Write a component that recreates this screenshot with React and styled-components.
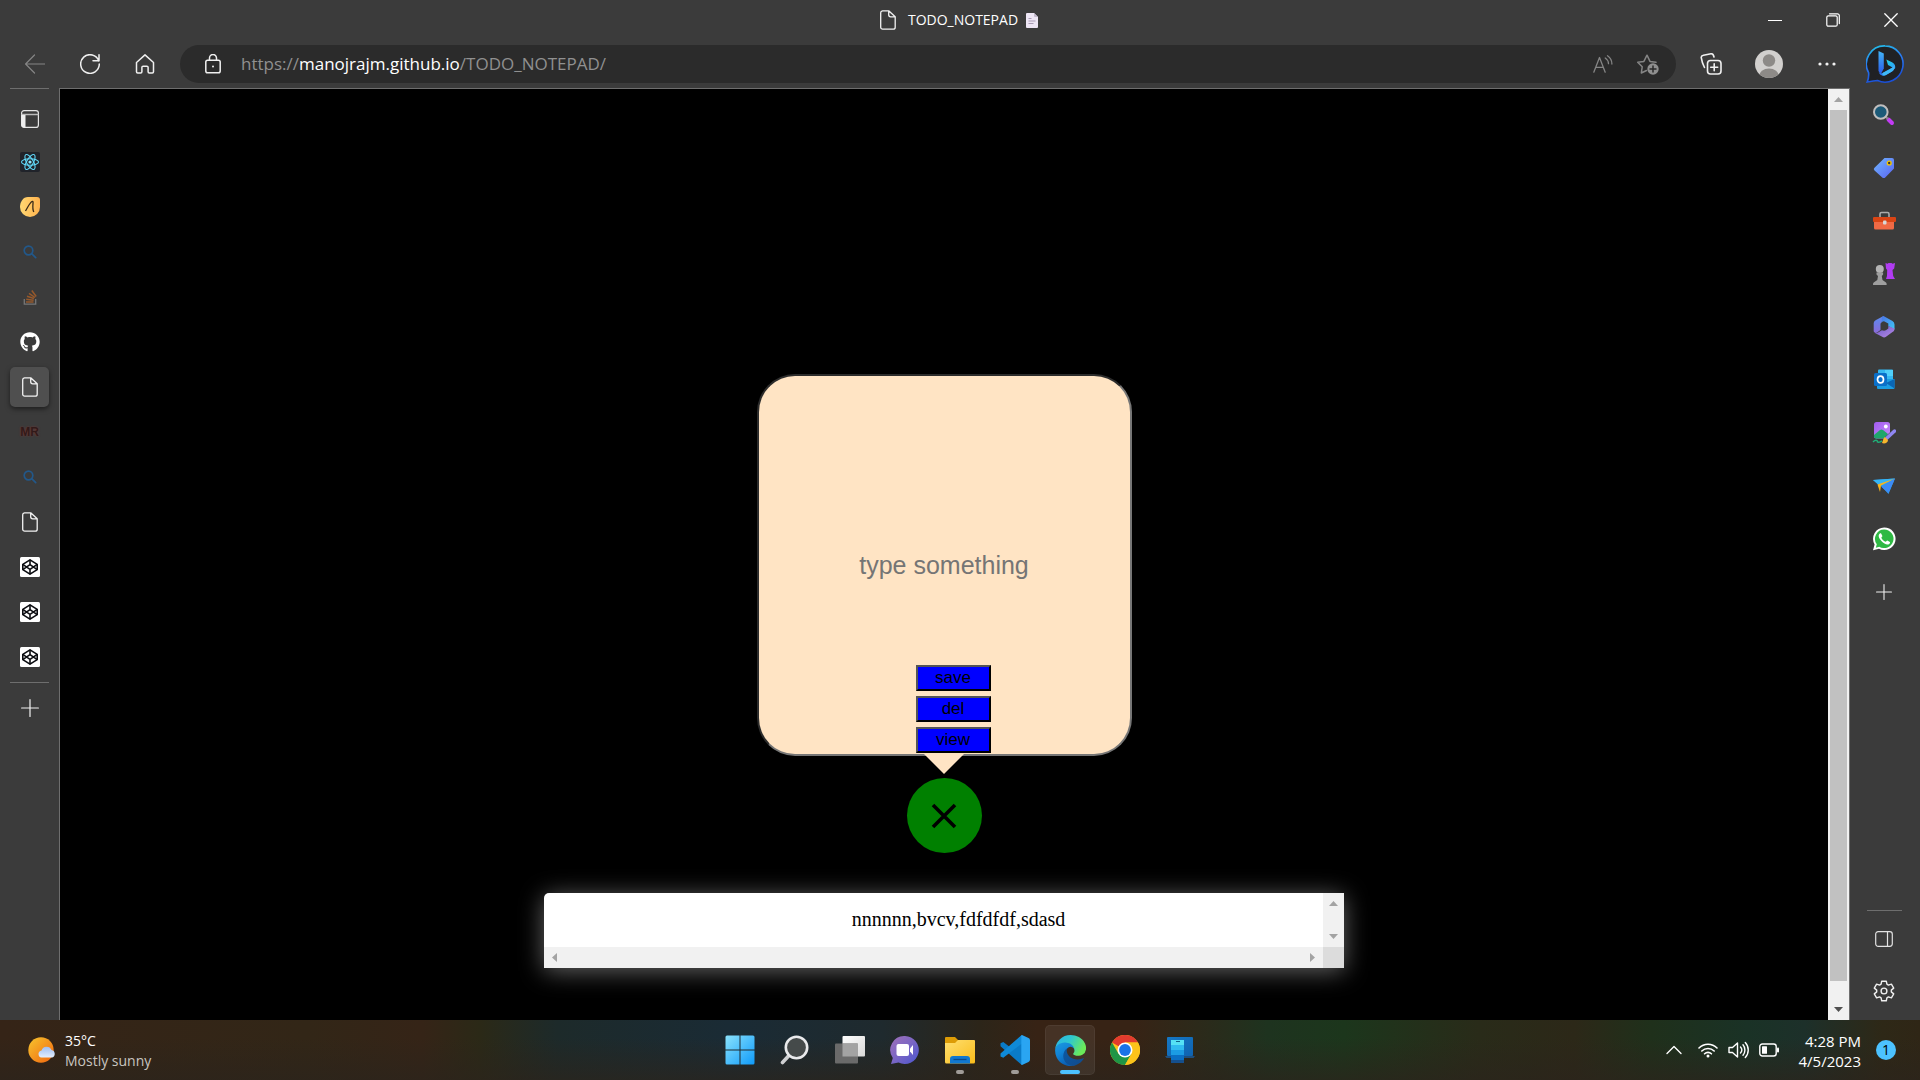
import React from 'react';
import styled, { createGlobalStyle, css } from 'styled-components';
import { FaGithub } from 'react-icons/fa';

const UI_FONT = '"Open Sans", "Noto Sans", sans-serif';
const CHROME = '#3b3b3b';
const LINE = '#6e6e6e';

const GlobalStyle = createGlobalStyle`
  *, *::before, *::after { box-sizing: border-box; }
  body {
    margin: 0;
    overflow: hidden;
    background: #000;
    color: #fff;
    font-family: ${UI_FONT};
    font-size: 14px;
  }
`;

const resetButton = css`
  display: flex;
  align-items: center;
  justify-content: center;
  flex: none;
  margin: 0;
  padding: 0;
  border: 0;
  background: none;
  color: inherit;
  font: inherit;
  cursor: pointer;
`;

const Screen = styled.div`
  display: grid;
  grid-template-rows: 40px 48px minmax(0, 1fr) 60px;
  height: 100vh;
`;

/* ---------- title bar ---------- */

const TitleBar = styled.header`
  display: grid;
  grid-template-columns: 1fr auto 1fr;
  align-items: center;
  background: ${CHROME};
`;

const PageTitle = styled.h1`
  display: flex;
  align-items: center;
  gap: 8px;
  grid-column: 2;
  margin: 0;
  padding-right: 4px;
  font-size: 14px;
  font-weight: 400;
  line-height: 20px;
`;

const TitleText = styled.span`
  padding-left: 2px;
`;

const WindowControls = styled.div`
  display: flex;
  justify-content: flex-end;
`;

const WindowButton = styled.button`
  ${resetButton}
  width: 58px;
  height: 40px;
`;

/* ---------- toolbar ---------- */

const Toolbar = styled.div`
  display: flex;
  align-items: center;
  background: ${CHROME};
`;

const NavGroup = styled.nav`
  display: flex;
  gap: 10px;
  padding: 0 13px 0 12px;
`;

const ToolButton = styled.button`
  ${resetButton}
  width: ${(p) => (p.$wide ? 46 : 45)}px;
  height: 38px;
  color: ${(p) => (p.$dim ? '#858585' : '#f0f0f0')};
`;

const AddressBar = styled.div`
  display: flex;
  flex: 1;
  align-items: center;
  height: 38px;
  padding: 0 6px 0 10px;
  border-radius: 19px;
  background: #2b2b2b;
`;

const Address = styled.div`
  flex: 1;
  padding-left: 6px;
  color: #909090;
  font-size: 17px;
  line-height: 24px;
  white-space: nowrap;
  outline: none;

  strong {
    color: #fff;
    font-weight: 400;
  }
`;

const ActionGroup = styled.div`
  display: flex;
  gap: 12px;
  padding: 0 12px;
`;

/* ---------- middle ---------- */

const Workspace = styled.div`
  display: grid;
  grid-template-columns: 59px minmax(0, 1fr) 70px;
  min-height: 0;
`;

const TabStrip = styled.aside`
  display: flex;
  flex-direction: column;
  align-items: center;
  gap: 5px;
  background: ${CHROME};
`;

const Rule = styled.hr`
  flex: none;
  width: ${(p) => p.$width}px;
  height: 1px;
  margin: 0;
  border: 0;
  background: ${LINE};
`;

const StripTop = styled.div`
  display: flex;
  flex-direction: column;
  align-items: center;
  gap: 10px;
  height: 49px;
`;

const Tab = styled.button`
  ${resetButton}
  width: 39px;
  height: 40px;
  border-radius: 5px;
  background: ${(p) => (p.$active ? '#4f4f4f' : 'transparent')};
  box-shadow: ${(p) => (p.$active ? '0 2px 5px rgba(0, 0, 0, 0.5)' : 'none')};
`;

const Monogram = styled.span`
  color: #301a19;
  font: 700 12px/20px "Liberation Sans", Arial, sans-serif;
  text-shadow: 0 0 2px #7a3532;
`;

const Viewport = styled.div`
  display: flex;
  min-height: 0;
  border: solid ${LINE};
  border-width: 1px 1px 0;
  background: #000;
`;

const Page = styled.main`
  display: flex;
  flex: 1;
  flex-direction: column;
  align-items: center;
  padding-top: 285px;
`;

const Scrollbar = styled.div`
  display: flex;
  flex: none;
  flex-direction: ${(p) => (p.$horizontal ? 'row' : 'column')};
  justify-content: space-between;
  ${(p) => (p.$horizontal ? 'height' : 'width')}: 21px;
  background: #f1f1f1;
`;

const ScrollArrow = styled.button`
  ${resetButton}
  width: 21px;
  height: 21px;
  color: ${(p) => (p.$enabled ? '#505050' : '#a3a3a3')};
`;

const Thumb = styled.div`
  flex: 1;
  margin: 0 2px 18px;
  background: #c1c1c1;
`;

const NoteForm = styled.form`
  display: grid;
  position: relative;
  width: 375px;

  &::after {
    content: '';
    position: absolute;
    top: calc(100% - 2px);
    left: calc(50% - 20px);
    border: 20px solid transparent;
    border-top-color: bisque;
    border-bottom: 0;
  }
`;

const NoteInput = styled.input`
  grid-area: 1 / 1;
  width: 100%;
  height: 382px;
  padding: 0;
  border: 2px solid;
  border-color: #2c2c2c #767676 #767676 #2c2c2c;
  border-radius: 38px;
  background: bisque;
  color: #000;
  font: 25px "Liberation Sans", Arial, sans-serif;
  text-align: center;
  outline: none;

  &::placeholder {
    color: #757575;
    opacity: 1;
  }
`;

const NoteActions = styled.div`
  display: flex;
  flex-direction: column;
  grid-area: 1 / 1;
  place-self: end center;
  gap: 5px;
  padding: 0 0 3px 18px;
`;

const NoteButton = styled.button`
  width: 75px;
  height: 26px;
  padding: 0;
  border: 2px solid;
  border-color: #555 #000 #000 #555;
  background: #00f;
  color: #000;
  font: 17px/20px "Liberation Sans", Arial, sans-serif;
`;

const CloseCircle = styled.button`
  ${resetButton}
  width: 75px;
  height: 75px;
  margin-top: 22px;
  border-radius: 50%;
  background: #008000;
  color: #000;
`;

const SavedBox = styled.section`
  display: grid;
  grid-template-columns: minmax(0, 1fr) 21px;
  grid-template-rows: 54px 21px;
  width: 800px;
  margin-top: 40px;
  border-radius: 5px 0 0 0;
  background: #fff;
  box-shadow: 0 3px 25px rgba(255, 255, 255, 0.4);
`;

const SavedText = styled.p`
  margin: 0;
  padding-left: 50px;
  color: #000;
  font: 20px/52px "Liberation Serif", "Times New Roman", serif;
  text-align: center;
`;

const ScrollCorner = styled.div`
  background: #dcdcdc;
`;

const SideBar = styled.aside`
  display: flex;
  flex-direction: column;
  align-items: center;
  gap: 5px;
  padding: 3px 2px 5px 0;
  background: ${CHROME};
`;

const SideButton = styled.button`
  ${resetButton}
  width: 48px;
  height: 48px;
`;

const SideFooter = styled.div`
  display: flex;
  flex-direction: column;
  align-items: center;
  gap: 4px;
  margin-top: auto;
`;

/* ---------- taskbar ---------- */

const TaskBar = styled.footer`
  display: grid;
  grid-template-columns: 1fr auto 1fr;
  align-items: center;
  background:
    linear-gradient(180deg, rgba(43, 36, 28, 0) 30%, rgba(43, 36, 28, 0.7) 100%),
    linear-gradient(90deg, #352417 0%, #322617 16%, #352417 22%, #2b2917 25%, #1d2a2a 29%,
      #1a2b35 38%, #1f2a2e 46%, #2c2519 51%, #372315 54%, #372315 59%, #2a2b1b 63%,
      #1e331f 66%, #1c361c 70%, #292b19 77%, #2c2818 82%, #1f301b 86%, #1a3226 91%,
      #1d302a 94%, #2e2817 98%, #2f2616 100%);
`;

const Weather = styled.button`
  ${resetButton}
  justify-self: start;
  gap: 9px;
  padding-left: 28px;
  text-align: left;
`;

const TwoLines = styled.span`
  display: flex;
  flex-direction: column;
  padding-top: 2px;
  font-size: 14px;
  line-height: 20px;
`;

const Muted = styled.span`
  color: #c9c5c0;
`;

const AppRow = styled.div`
  display: flex;
  gap: 5px;
`;

const AppButton = styled.button`
  ${resetButton}
  position: relative;
  width: 50px;
  height: 50px;
  border-radius: 5px;
  background: ${(p) => (p.$state === 'active' ? 'rgba(255, 255, 255, 0.07)' : 'none')};
  box-shadow: ${(p) => (p.$state === 'active' ? 'inset 0 0 0 1px rgba(255, 255, 255, 0.05)' : 'none')};

  &::after {
    content: '';
    display: ${(p) => (p.$state ? 'block' : 'none')};
    position: absolute;
    bottom: 1px;
    left: 50%;
    width: ${(p) => (p.$state === 'active' ? 20 : 8)}px;
    height: 4px;
    border-radius: 2px;
    background: ${(p) => (p.$state === 'active' ? '#4cc2ff' : '#a09c98')};
    transform: translateX(-50%);
  }
`;

const Tray = styled.div`
  display: flex;
  align-items: center;
  justify-self: end;
  gap: 16px;
  padding-right: 24px;
`;

const TrayButton = styled.button`
  ${resetButton}
  gap: 10px;
`;

const Clock = styled(TwoLines)`
  align-items: flex-end;
  padding-right: 5px;
  padding-left: 4px;
  font-size: 15px;
`;

const Badge = styled.span`
  width: 20px;
  height: 20px;
  border-radius: 50%;
  background: #4cc2ff;
  color: #000;
  font-size: 14px;
  line-height: 20px;
  text-align: center;
`;

/* ---------- drawings ---------- */

function Line({ w = 20, h = w, box, sw = 1, children, color = 'currentColor' }) {
  return (
    <svg width={w} height={h} viewBox={box || `0 0 ${w} ${h}`} fill="none" stroke={color}
      strokeWidth={sw} strokeLinecap="round" strokeLinejoin="round" aria-hidden="true">
      {children}
    </svg>
  );
}

function Art({ w = 24, h = w, box, children }) {
  return (
    <svg width={w} height={h} viewBox={box || `0 0 ${w} ${h}`} aria-hidden="true">
      {children}
    </svg>
  );
}

function Gradient({ id, from, to, x2 = 1, y2 = 1, mid }) {
  return (
    <linearGradient id={id} x1="0" y1="0" x2={x2} y2={y2}>
      <stop offset="0" stopColor={from} />
      {mid && <stop offset=".5" stopColor={mid} />}
      <stop offset="1" stopColor={to} />
    </linearGradient>
  );
}

const FileIcon = () => (
  <Line w={20} sw={1.3} color="#f2f2f2">
    <path d="M4.500.8h6.200l6.500 6v10.400a2 2 0 0 1-2 2H4.700a2 2 0 0 1-2-2V2.800a2 2 0 0 1 1.800-2zM10.700.8v4a2 2 0 0 0 2 2h4.500" />
  </Line>
);

const PageEmoji = () => (
  <Art w={12} h={15}>
    <path d="M1 0h7l4 4v10a1 1 0 0 1-1 1H1a1 1 0 0 1-1-1V1a1 1 0 0 1 1-1z" fill="#eee6f5" />
    <path d="M8 0l4 4H9a1 1 0 0 1-1-1z" fill="#c4bacd" />
    <path d="M2.500 5.500h3M2.500 8h7M2.500 10.500h5" stroke="#a99bb4" />
  </Art>
);

const PlusIcon = ({ size = 18 }) => (
  <Line w={size} box="0 0 18 18" sw={1.2} color="#f2f2f2"><path d="M9 .6v16.800M.6 9h16.800" /></Line>
);

const PanelIcon = () => (
  <Art w={20}>
    <rect x="1.600" y="1.600" width="16.800" height="16.800" rx="2.500" fill="none" stroke="#e6e6e6" strokeWidth="1.200" />
    <path d="M1.500 5.500h17" stroke="#bbb" strokeWidth="1.500" />
    <path d="M1.500 6h4v12.400H4a2.500 2.500 0 0 1-2.500-2.500z" fill="#eee" />
  </Art>
);

const ReactIcon = () => (
  <Art w={20}>
    <rect width="20" height="20" rx="2" fill="#20232a" />
    <g fill="none" stroke="#61dafb" strokeWidth="1.100">
      <ellipse cx="10" cy="10" rx="8.500" ry="3.300" />
      <ellipse cx="10" cy="10" rx="8.500" ry="3.300" transform="rotate(60 10 10)" />
      <ellipse cx="10" cy="10" rx="8.500" ry="3.300" transform="rotate(120 10 10)" />
    </g>
    <circle cx="10" cy="10" r="1.600" fill="#8be8ff" />
  </Art>
);

const AmberIcon = () => (
  <Art w={20}>
    <defs><Gradient id="amber" from="#ffd873" to="#ffb24d" y2={0} /></defs>
    <path d="M8 0h9a3 3 0 0 1 3 3v7A10 10 0 1 1 0 10C0 5 3 0 8 0z" fill="url(#amber)" />
    <path d="M5.500 14C8 10 9.500 6 12 4.500c1-.5 1.200.5 1 2-.3 3-.5 6 .8 8.500" fill="none" stroke="#3a2a18" strokeWidth="1.300" />
  </Art>
);

const SearchTab = () => (
  <Line w={14} sw={1.7} color="#22588a"><circle cx="5.500" cy="5.500" r="4.300" /><path d="M8.700 8.700l4 4" /></Line>
);

const StackIcon = () => (
  <Art w={16}>
    <path d="M2.300 10v5.200h11.400V10" fill="none" stroke="#777" strokeWidth="1.300" />
    <path d="M4 13h7.500M4.200 10.300l7.400.9M5 7.300l7 2.200M7 4.300l6 4.200M9.800 1.500l4.400 6" stroke="#96592c" strokeWidth="1.500" fill="none" />
  </Art>
);

const CodepenIcon = () => (
  <Art w={20}>
    <rect width="20" height="20" rx="1.500" fill="#fff" />
    <g fill="none" stroke="#0c0d11" strokeWidth="1.600" strokeLinejoin="round">
      <path d="M10 2.800l7.200 4.600v5.200L10 17.200l-7.200-4.600V7.400z" />
      <path d="M2.800 7.400L10 12.400l7.200-5M2.800 12.600L10 7.600l7.200 5M10 2.800v4.800M10 12.400v4.800" />
    </g>
  </Art>
);

const BingIcon = () => (
  <Art w={38}>
    <defs>
      <Gradient id="bingRing" from="#22c6e6" to="#1a50d8" mid="#2a7cf2" x2={0.3} />
      <Gradient id="bingStem" from="#42b4f5" to="#2a5bea" x2={0} />
      <Gradient id="bingLeaf" from="#22d0e8" to="#2f9df5" />
    </defs>
    <path d="M19 .9a18.100 18.100 0 1 1-7.500 34.600c-3 .2-7 .9-10.300 1.500 1.300-3 1.700-6.300 1.400-9.300A18.100 18.100 0 0 1 19 .9z" fill="#202124" stroke="url(#bingRing)" strokeWidth="1.600" />
    <path d="M12.500 6l5.300 2.500V23.500l-2.800 5.200a4 4 0 0 1-2.500-3.500z" fill="url(#bingStem)" />
    <path d="M20.300 14.500l5.700 2.700a6 6 0 0 1 3 6.800l-5.500-3.200-1.500-.8z" fill="url(#bingLeaf)" />
    <path d="M12.500 25c0 4.500 3.800 7 7.500 5l6-3.500c3-2 3.500-5.500 1.800-7 0 2-1.200 3.200-3 4L16.500 28c-2 1-4-.3-4-3z" fill="#2c74f0" />
    <path d="M16.500 28l8.300-4.500c1.800-.8 3-2 3-4 1.700 1.500 1.200 5-1.800 7L20 30c-1.300.6-2.500.7-3.500.4z" fill="#3fb9f6" />
  </Art>
);

const LensIcon = () => (
  <Art>
    <path d="M16.500 16.500l3.500 3.500" stroke="#c33bf5" strokeWidth="4" strokeLinecap="round" />
    <path d="M13 13l3 3" stroke="#888" strokeWidth="2" />
    <circle cx="8.800" cy="9" r="6.800" fill="#1c5a78" stroke="#c0bebe" strokeWidth="2" />
  </Art>
);

const TagIcon = () => (
  <Art>
    <defs><Gradient id="tag" from="#70b8ff" to="#5a62f0" /></defs>
    <path d="M12.500 2H20a2 2 0 0 1 2 2v8.500L13.500 21.200a2.500 2.500 0 0 1-3.500 0L2.500 14.500a1.800 1.800 0 0 1 0-2.700z" fill="url(#tag)" />
    <circle cx="17.200" cy="7" r="1.900" fill="#333" stroke="#f5c400" strokeWidth="1.400" />
  </Art>
);

const ToolboxIcon = () => (
  <Art>
    <path d="M8 8V5a1.500 1.500 0 0 1 1.500-1.500h6A1.500 1.500 0 0 1 17 5v3" fill="none" stroke="#aaa" strokeWidth="1.600" />
    <rect x="2" y="11" width="20" height="9.500" rx="1.500" fill="#f06a45" />
    <rect x="1" y="8" width="23" height="5" rx="1" fill="#d94414" />
    <rect x="11" y="11.500" width="3.500" height="4" rx="1" fill="#d8d8d8" />
  </Art>
);

const ChessIcon = () => (
  <Art>
    <path d="M13.500 1l2 .8 1-.8h3l1 .8 2.500-.8-.8 5.500-1.700 1.500.7 6 1.800 3h-9l1-3 .2-6-1.200-1.500z" fill="#b13cf2" />
    <circle cx="7.800" cy="7" r="4" fill="#b4b4b4" />
    <path d="M4.500 10.500h6.600v2l-1.300 1.500.7 4 3.500 2.500c.8.8.8 2.500.5 2.500H1.300c-.5 0-.4-1.800.4-2.500L5.300 18l.7-4-1.500-1.500z" fill="#9f9f9f" />
  </Art>
);

const M365Icon = () => (
  <Art>
    <defs>
      <Gradient id="mA" from="#5a8df0" to="#8a6ad8" x2={0} />
      <Gradient id="mB" from="#4a74e8" to="#3fc8f5" />
      <Gradient id="mC" from="#6a5ac8" to="#b78ae6" />
    </defs>
    <path d="M11.500 1L4 5A3.500 3.500 0 0 0 1.700 8v8c0 1.600 2 2.400 3.400 1.500L8.500 15V9.500c0-1 .3-1.700 1.200-2.300z" fill="url(#mA)" />
    <path d="M11.500 1L20.500 6a4 4 0 0 1 2 3.400v5L16.300 11V8.500L12 6.300c-2 0-2.300 1.200-2.300 2.500V3.500c0-1.200.7-2 1.800-2.500z" fill="url(#mB)" />
    <path d="M22.500 13.500c0 1.800-.6 2.800-2 3.600L14 21.800a3.500 3.500 0 0 1-3.800 0L3 17.900c1.600.4 2.800-.2 3.900-.9l3-1.800c1.500.6 2.800.6 4 0l2.400-1.600V11z" fill="url(#mC)" />
  </Art>
);

const OutlookIcon = () => (
  <Art>
    <rect x="6" y="1.500" width="15" height="13" rx="1" fill="#35b8f1" />
    <path d="M13 2h8v6h-8z" fill="#50d0fa" />
    <path d="M5 11l17.500 0v9a1 1 0 0 1-1 1H6a1 1 0 0 1-1-1z" fill="#1b9de2" />
    <path d="M22.500 11v9.500L14 15z" fill="#0a66b5" />
    <rect x="2" y="5" width="13" height="13" rx="1.500" fill="#0a6fc8" />
    <ellipse cx="8.500" cy="11.500" rx="3" ry="3.400" fill="none" stroke="#fff" strokeWidth="1.700" />
  </Art>
);

const DesignerIcon = () => (
  <Art>
    <defs><Gradient id="des" from="#a25cf0" to="#c48bf8" /></defs>
    <rect x="2" y="1" width="16" height="16.500" rx="2.500" fill="url(#des)" />
    <circle cx="13.800" cy="5.500" r="1.900" fill="#fff" />
    <path d="M2 14l6-5a2.500 2.500 0 0 1 3 0l5 4-4 4.500H4a2 2 0 0 1-2-2z" fill="#1fa66b" />
    <path d="M1 21c2.500-2.500 4.500-2 4.500 0 1.500 1 3-.5 4.500-1" fill="none" stroke="#20b078" strokeWidth="1.500" />
    <path d="M15 17.500l8-7.500" stroke="#3b3b3b" strokeWidth="5" strokeLinecap="round" />
    <path d="M15 17l7.500-7" stroke="#8f86f2" strokeWidth="3.400" strokeLinecap="round" />
    <path d="M13 16l3 3c0 3-3.500 4-6 3 1-1.500 1-5 3-6z" fill="#f7b62c" />
  </Art>
);

const DropIcon = () => (
  <Art>
    <path d="M1 6l22-1.500L16.500 20 10 13z" fill="#2c9cf0" />
    <path d="M1 6l22-1.500L6.500 11z" fill="#35b5f5" />
    <path d="M23 4.500L9 11.500 8 18 5.500 10.500z" fill="#f9b51c" />
    <path d="M23 4.500L16.500 19 9.500 13z" fill="#3d8bf5" />
  </Art>
);

const WhatsAppIcon = () => (
  <Art>
    <path d="M12.200.5A11.300 11.300 0 1 1 7 21.800L1 23.300l1.600-5.800A11.300 11.300 0 0 1 12.200.5z" fill="#fff" />
    <path d="M12.200 2.500A9.300 9.300 0 1 1 7.300 19.700l-3.500 1 1-3.400A9.300 9.300 0 0 1 12.200 2.500z" fill="#2fb944" />
    <path d="M9.300 6.800c-.4-.7-1-.6-1.500-.2-2 1.800-1.200 4.500 1.600 7.400s5.800 4.300 7.800 2.900c.8-.6 1-1.600.7-2l-2.600-1.300c-.7 0-.9 1.200-1.600 1.200-1.500-.3-4-2.700-4.300-4 0-.6 1.100-1.100 1-1.700z" fill="#fff" />
  </Art>
);

const WeatherIcon = () => (
  <Art w={28} h={26}>
    <defs>
      <Gradient id="sun" from="#f7c52e" to="#f0640e" />
      <Gradient id="cloud" from="#9dbdf2" to="#e4eefc" x2={0} />
    </defs>
    <circle cx="13" cy="13" r="12.700" fill="url(#sun)" />
    <path d="M13.500 20.500a3.600 3.600 0 0 1 0-7.100A5.300 5.300 0 0 1 23.500 13a3.900 3.900 0 0 1 .7 7.500z" fill="url(#cloud)" />
  </Art>
);

const StartIcon = () => (
  <Art w={30}>
    <defs><Gradient id="win" from="#8ae2fc" to="#0f9bfa" /></defs>
    <g fill="url(#win)">
      <path d="M2 .5h12.500V14.500H.5V2A1.500 1.500 0 0 1 2 .5zM15.500.5H28A1.500 1.500 0 0 1 29.500 2v12.500h-14zM.5 15.500h14v14H2A1.500 1.500 0 0 1 .5 28zM15.500 15.500h14V28a1.500 1.500 0 0 1-1.500 1.500H15.500z" />
    </g>
  </Art>
);

const TaskSearchIcon = () => (
  <Art w={30}>
    <path d="M8.500 21l-6 6.500" stroke="#cfd0d2" strokeWidth="3.600" strokeLinecap="round" />
    <circle cx="16.500" cy="12.500" r="10.700" fill="#454a4a" stroke="#e9eaec" strokeWidth="2.600" />
  </Art>
);

const TaskViewIcon = () => (
  <Art w={30}>
    <defs><Gradient id="tv" from="#fff" to="#d8d8d8" /></defs>
    <rect x="7.500" y="1" width="22.500" height="20.500" rx="1" fill="url(#tv)" />
    <rect x="0" y="8.500" width="23" height="20" rx="1" fill="#6a6a6a" />
    <rect x="7.500" y="8.500" width="15.500" height="13" fill="#a3a3a3" />
  </Art>
);

const ChatIcon = () => (
  <Art w={30}>
    <defs><Gradient id="chat" from="#a070b8" to="#4a55d0" mid="#7a66c4" /></defs>
    <path d="M15 1a14 14 0 1 1-6.500 26.500L1 29l1.800-6A14 14 0 0 1 15 1z" fill="url(#chat)" />
    <rect x="6.500" y="9" width="12.500" height="12" rx="2" fill="#fff" />
    <path d="M20 13.500l3-3.500v10l-3-3.500z" fill="#fff" />
  </Art>
);

const FolderIcon = () => (
  <Art w={30}>
    <defs><Gradient id="fold" from="#ffdf70" to="#f9bc1a" /></defs>
    <path d="M0 3a1 1 0 0 1 1-1h9l3 3v6H0z" fill="#dd9c06" />
    <path d="M0 8h10l3-3h16a1 1 0 0 1 1 1v21a1.500 1.500 0 0 1-1.500 1.500h-27A1.500 1.500 0 0 1 0 27z" fill="url(#fold)" />
    <path d="M5 28.500V24a3 3 0 0 1 3-3h14a3 3 0 0 1 3 3v4.500z" fill="#1178cf" />
    <path d="M8.500 24.500h13" stroke="#0a4a8c" strokeWidth="1.300" />
  </Art>
);

const CodeIcon = () => (
  <Art w={30}>
    <path d="M22 0L9.500 11.700 3.300 7 .5 8.300v3L21.500 29.800l.8-.3V21.500z" fill="#0a7bc8" />
    <path d="M22 8.500L3.300 22.800.5 21.500v-3L21.500.2z" fill="#0f8ad8" />
    <path d="M22 0l6.500 3A2.500 2.500 0 0 1 30 5.200v19.600a2.500 2.500 0 0 1-1.500 2.200L22 30c-.8-.4-1-1-.7-2V2c-.3-1-.1-1.600.7-2z" fill="#2aa5f2" />
  </Art>
);

const EdgeIcon = () => (
  <Art w={31} box="4 4 256 256">
    <defs>
      <Gradient id="eA" from="#0c59a4" to="#114a8b" />
      <Gradient id="eB" from="#1b9de2" to="#0a5cb0" mid="#1283d6" x2={0.5} />
      <Gradient id="eC" from="#2bb3e8" to="#6bea5a" mid="#2fc7ce" y2={0.4} />
    </defs>
    <path fill="url(#eA)" d="M235.680 195.460a93.730 93.730 0 0 1-10.540 4.710 101.870 101.870 0 0 1-35.900 6.460c-47.320 0-88.540-32.550-88.540-74.320A31.480 31.480 0 0 1 117.130 105c-42.800 1.800-53.800 46.400-53.800 72.530 0 73.880 68.090 81.370 82.760 81.370 7.910 0 19.840-2.300 27-4.560l1.310-.44a128.340 128.340 0 0 0 66.600-52.800 4 4 0 0 0-5.320-5.640z" />
    <path fill="url(#eB)" d="M110.340 246.340A79.200 79.200 0 0 1 87.600 225a80.720 80.720 0 0 1 29.530-120c3.120-1.470 8.450-4.130 15.540-4a32.350 32.350 0 0 1 25.690 13 31.880 31.880 0 0 1 6.360 18.660c0-.21 24.460-79.600-80-79.600-43.900 0-80 41.660-80 78.210a130.150 130.150 0 0 0 12.110 56 128 128 0 0 0 156.380 67.110 75.550 75.550 0 0 1-62.780-8z" />
    <path fill="url(#eC)" d="M156.940 153.780c-.81 1.050-3.300 2.500-3.300 5.660 0 2.610 1.700 5.120 4.720 7.230 14.380 10 41.490 8.680 41.560 8.680a59.560 59.560 0 0 0 30.270-8.350 61.380 61.380 0 0 0 30.430-52.880c.26-22.410-8-37.310-11.340-43.910-21.190-41.440-66.920-65.270-116.650-65.270a128 128 0 0 0-128 126.200c.48-36.540 36.800-66.050 80-66.050 3.500 0 23.460.34 42 10.070 16.340 8.580 24.900 18.940 30.850 29.210 6.180 10.670 7.280 24.150 7.280 29.520 0 5.370-2.740 13.330-7.820 19.890z" />
  </Art>
);

const ChromeIcon = () => (
  <Art w={30}>
    <circle cx="15" cy="15" r="15" fill="#fcc31a" />
    <path d="M15 15L2 7.500A15 15 0 0 1 28 7.500H15z" fill="#e33b2e" />
    <path d="M2 7.500A15 15 0 0 0 15 30l6.500-11.300L15 15 8.500 18.700z" fill="#1e9546" />
    <path d="M21.500 18.700L15 30A15 15 0 0 0 28 7.500H15z" fill="#fcc31a" />
    <circle cx="15" cy="15" r="7.500" fill="#fff" />
    <circle cx="15" cy="15" r="5.900" fill="#1a73e8" />
  </Art>
);

const PhoneLinkIcon = () => (
  <Art w={30}>
    <defs><Gradient id="link" from="#1578c4" to="#0f62b0" /></defs>
    <rect x="2" y="2" width="26" height="19" rx="1" fill="url(#link)" />
    <path d="M0 21h30l-1.500 2h-27z" fill="#1d4f80" />
    <path d="M6 5h13v20H6z" fill="#1b9ce4" />
    <path d="M6 5h13v5H6z" fill="#55e2f5" />
    <path d="M6 10h13v5H6z" fill="#30bcf0" />
    <path d="M6 20h13v5H6z" fill="#0a6fc4" />
    <path d="M6 25h13v3H6z" fill="#154f8c" />
    <path d="M11 6.500h4" stroke="#12658c" />
  </Art>
);

const BackIcon = () => (
  <Line w={20} sw={1.2}><path d="M19.500 10H.6M9.500 1L.6 10l8.900 9" /></Line>
);

const ReloadIcon = () => (
  <Line w={20} sw={1.5}><path d="M18.800 7A9.300 9.300 0 1 0 19.300 10M19 .8V6.800H13" /></Line>
);

const HomeIcon = () => (
  <Line w={20} sw={1.5}>
    <path d="M1.500 8.500L10 .9l8.500 7.600V17.800a1.200 1.200 0 0 1-1.200 1.200h-3a1.200 1.200 0 0 1-1.200-1.200V13.500a1.300 1.300 0 0 0-1.300-1.300H8.200a1.300 1.300 0 0 0-1.300 1.300v4.300A1.200 1.200 0 0 1 5.700 19h-3a1.200 1.200 0 0 1-1.200-1.200z" />
  </Line>
);

const LockIcon = () => (
  <Line w={18} h={20} sw={1.5}>
    <rect x="1.800" y="6.200" width="14.400" height="12.600" rx="1.800" />
    <path d="M5.500 6V4a3.500 3.500 0 0 1 7 0v2" />
    <circle cx="9" cy="12.500" r="1" fill="currentColor" stroke="none" />
  </Line>
);

const ReadAloudIcon = () => (
  <Line w={20} h={18} sw={1.3}>
    <path d="M.8 17.200L6.500 2.500l5.700 14.700M2.700 12.300h7.600M12.200 3a7 7 0 0 1 3.300 5.700M14.500.8a10 10 0 0 1 4.400 8.200" />
  </Line>
);

const StarIcon = () => (
  <Line w={24} h={22} sw={1.5}>
    <path d="M10.500 17.500L5.300 20l.9-6.200L1.700 9.300l6.200-.9L11 2.200l3 6.200 6 .9" />
    <circle cx="17" cy="16" r="5.700" fill="#8f8f8f" stroke="none" />
    <path d="M17 13v6M14 16h6" stroke="#2b2b2b" />
  </Line>
);

const CollectionsIcon = () => (
  <Line w={22} sw={1.6}>
    <rect x="7.500" y="7.500" width="13.500" height="13.500" rx="3" />
    <path d="M14.200 10.700v7M10.700 14.200h7M4.500 14.500C3 11.500 1.500 6.500 1.200 4.300c0-1.200 1-1.700 2.300-2L11 .8c1.800-.2 2.500.8 3 3.200" />
  </Line>
);

const Avatar = () => (
  <Art w={28}>
    <defs><clipPath id="face"><circle cx="14" cy="14" r="14" /></clipPath></defs>
    <g clipPath="url(#face)">
      <rect width="28" height="28" fill="#d2d0ce" />
      <circle cx="14" cy="10.500" r="6.200" fill="#8d8a87" />
      <ellipse cx="14" cy="26.500" rx="10" ry="8" fill="#8d8a87" />
    </g>
  </Art>
);

const DotsIcon = () => (
  <Art w={18} h={4}><g fill="#f2f2f2"><circle cx="2" cy="2" r="1.600" /><circle cx="9" cy="2" r="1.600" /><circle cx="16" cy="2" r="1.600" /></g></Art>
);

const DockIcon = () => (
  <Line w={18} h={16} sw={1.2} color="#e2e2e2"><rect x=".7" y=".7" width="16.600" height="14.600" rx="2.500" /><path d="M12.500 1v14" /></Line>
);

const GearIcon = () => (
  <Line w={22} sw={1.4} color="#f0f0f0">
    <path d="M8.700 1.200h4.600l.6 3 1.500.9 3-1 2.300 4-2.400 2v1.800l2.400 2-2.300 4-3-1-1.500.9-.6 3H8.700l-.6-3-1.500-.9-3 1-2.300-4 2.400-2v-1.800l-2.400-2 2.300-4 3 1 1.500-.9z" />
    <circle cx="11" cy="11" r="2.900" />
  </Line>
);

const Chevron = () => <Line w={16} h={10} sw={1.4}><path d="M1 8.500l7-7 7 7" /></Line>;

const WifiIcon = () => (
  <Line w={20} h={16} sw={1.6}>
    <path d="M1 6a12.700 12.700 0 0 1 18 0M3.800 9a8.800 8.800 0 0 1 12.400 0M6.600 11.800a4.800 4.800 0 0 1 6.800 0" />
    <circle cx="10" cy="14" r="1.500" fill="currentColor" stroke="none" />
  </Line>
);

const SpeakerIcon = () => (
  <Line w={21} h={18} sw={1.4}>
    <path d="M1 6.500h3.500L9.500 2v14l-5-4.500H1zM12.500 6a4.500 4.500 0 0 1 0 6M15 3.800a8 8 0 0 1 0 10.400M17.300 1.500a11 11 0 0 1 0 15" />
  </Line>
);

const BatteryIcon = () => (
  <Line w={20} h={14} sw={1.4}>
    <rect x=".8" y="1" width="16.400" height="12" rx="2.500" />
    <rect x="3" y="3.200" width="5" height="7.600" rx=".5" fill="currentColor" stroke="none" />
    <path d="M19 5.500v3" strokeWidth="2" />
  </Line>
);

const ARROWS = {
  up: 'M0 5l4.500-5L9 5z',
  down: 'M0 0h9L4.500 5z',
  left: 'M5 0v9L0 4.500z',
  right: 'M0 0l5 4.500L0 9z',
};

function Arrow({ to, enabled }) {
  const upright = to === 'up' || to === 'down';
  return (
    <ScrollArrow type="button" aria-label={`Scroll ${to}`} $enabled={enabled}>
      <svg width={upright ? 9 : 5} height={upright ? 5 : 9} fill="currentColor" aria-hidden="true">
        <path d={ARROWS[to]} />
      </svg>
    </ScrollArrow>
  );
}

/* ---------- data ---------- */

const TABS = [
  { name: 'React', icon: <ReactIcon /> },
  { name: 'Amber', icon: <AmberIcon /> },
  { name: 'Search', icon: <SearchTab /> },
  { name: 'Stack Overflow', icon: <StackIcon /> },
  { name: 'GitHub', icon: <FaGithub size={20} color="#fff" /> },
  { name: 'TODO_NOTEPAD', icon: <FileIcon />, active: true },
  { name: 'MR', icon: <Monogram>MR</Monogram> },
  { name: 'Search results', icon: <SearchTab /> },
  { name: 'Document', icon: <FileIcon /> },
  { name: 'Pen one', icon: <CodepenIcon /> },
  { name: 'Pen two', icon: <CodepenIcon /> },
  { name: 'Pen three', icon: <CodepenIcon /> },
];

const SIDE_APPS = [
  ['Search', LensIcon], ['Shopping', TagIcon], ['Tools', ToolboxIcon], ['Games', ChessIcon],
  ['Microsoft 365', M365Icon], ['Outlook', OutlookIcon], ['Image Creator', DesignerIcon],
  ['Drop', DropIcon], ['WhatsApp', WhatsAppIcon],
];

const TASK_APPS = [
  ['Start', StartIcon], ['Search', TaskSearchIcon], ['Task view', TaskViewIcon], ['Chat', ChatIcon],
  ['File Explorer', FolderIcon, 'open'], ['Visual Studio Code', CodeIcon, 'open'],
  ['Edge', EdgeIcon, 'active'], ['Chrome', ChromeIcon], ['Phone Link', PhoneLinkIcon],
];

export default function App() {
  return (
    <Screen>
      <GlobalStyle />

      <TitleBar>
        <PageTitle><FileIcon /><TitleText>TODO_NOTEPAD</TitleText><PageEmoji /></PageTitle>
        <WindowControls>
          <WindowButton type="button" aria-label="Minimize"><Line w={14} sw={1.2}><path d="M.5 7.500h13" /></Line></WindowButton>
          <WindowButton type="button" aria-label="Restore">
            <Line w={14} sw={1.2}><rect x=".8" y="2.800" width="10.400" height="10.400" rx="1.500" /><path d="M3.500.8h8a1.800 1.800 0 0 1 1.800 1.800v8" /></Line>
          </WindowButton>
          <WindowButton type="button" aria-label="Close"><Line w={14} sw={1.3}><path d="M.8.8l12.400 12.400M13.200.8L.8 13.200" /></Line></WindowButton>
        </WindowControls>
      </TitleBar>

      <Toolbar>
        <NavGroup>
          <ToolButton type="button" aria-label="Back" $dim><BackIcon /></ToolButton>
          <ToolButton type="button" aria-label="Refresh"><ReloadIcon /></ToolButton>
          <ToolButton type="button" aria-label="Home"><HomeIcon /></ToolButton>
        </NavGroup>
        <AddressBar>
          <ToolButton type="button" aria-label="Site information"><LockIcon /></ToolButton>
          <Address role="textbox" aria-label="Address" tabIndex={0}>
            https://<strong>manojrajm.github.io</strong>/TODO_NOTEPAD/
          </Address>
          <ToolButton type="button" aria-label="Read aloud" $dim><ReadAloudIcon /></ToolButton>
          <ToolButton type="button" aria-label="Add to favorites" $dim><StarIcon /></ToolButton>
        </AddressBar>
        <ActionGroup>
          <ToolButton type="button" aria-label="Collections" $wide><CollectionsIcon /></ToolButton>
          <ToolButton type="button" aria-label="Profile" $wide><Avatar /></ToolButton>
          <ToolButton type="button" aria-label="Settings and more" $wide><DotsIcon /></ToolButton>
          <ToolButton type="button" aria-label="Bing" $wide><BingIcon /></ToolButton>
        </ActionGroup>
      </Toolbar>

      <Workspace>
        <TabStrip>
          <StripTop>
            <Rule $width={39} />
            <Tab type="button" aria-label="Tab actions"><PanelIcon /></Tab>
          </StripTop>
          {TABS.map((tab) => (
            <Tab key={tab.name} type="button" aria-label={tab.name} $active={tab.active}>{tab.icon}</Tab>
          ))}
          <Rule $width={39} />
          <Tab type="button" aria-label="New tab"><PlusIcon /></Tab>
        </TabStrip>

        <Viewport>
          <Page>
            <NoteForm onSubmit={(e) => e.preventDefault()}>
              <NoteInput type="text" aria-label="Note" placeholder="type something" />
              <NoteActions>
                <NoteButton type="submit">save</NoteButton>
                <NoteButton type="button">del</NoteButton>
                <NoteButton type="button">view</NoteButton>
              </NoteActions>
            </NoteForm>
            <CloseCircle type="button" aria-label="Close note">
              <svg width="26" height="26" viewBox="0 0 26 26" aria-hidden="true">
                <path d="M2 2l22 22M24 2L2 24" stroke="currentColor" strokeWidth="3.600" />
              </svg>
            </CloseCircle>
            <SavedBox>
              <SavedText>nnnnnn,bvcv,fdfdfdf,sdasd</SavedText>
              <Scrollbar><Arrow to="up" /><Arrow to="down" /></Scrollbar>
              <Scrollbar $horizontal><Arrow to="left" /><Arrow to="right" /></Scrollbar>
              <ScrollCorner />
            </SavedBox>
          </Page>
          <Scrollbar>
            <Arrow to="up" />
            <Thumb />
            <Arrow to="down" enabled />
          </Scrollbar>
        </Viewport>

        <SideBar>
          {SIDE_APPS.map(([name, Icon]) => (
            <SideButton key={name} type="button" aria-label={name}><Icon /></SideButton>
          ))}
          <SideButton type="button" aria-label="Customize"><PlusIcon size={16} /></SideButton>
          <SideFooter>
            <Rule $width={35} />
            <SideButton type="button" aria-label="Hide sidebar"><DockIcon /></SideButton>
            <SideButton type="button" aria-label="Settings"><GearIcon /></SideButton>
          </SideFooter>
        </SideBar>
      </Workspace>

      <TaskBar>
        <Weather type="button">
          <WeatherIcon />
          <TwoLines><span>35°C</span><Muted>Mostly sunny</Muted></TwoLines>
        </Weather>
        <AppRow>
          {TASK_APPS.map(([name, Icon, state]) => (
            <AppButton key={name} type="button" aria-label={name} $state={state}><Icon /></AppButton>
          ))}
        </AppRow>
        <Tray>
          <TrayButton type="button" aria-label="Hidden icons"><Chevron /></TrayButton>
          <TrayButton type="button" aria-label="Network, volume and battery"><WifiIcon /><SpeakerIcon /><BatteryIcon /></TrayButton>
          <TrayButton type="button">
            <Clock><span>4:28 PM</span><span>4/5/2023</span></Clock>
            <Badge>1</Badge>
          </TrayButton>
        </Tray>
      </TaskBar>
    </Screen>
  );
}
